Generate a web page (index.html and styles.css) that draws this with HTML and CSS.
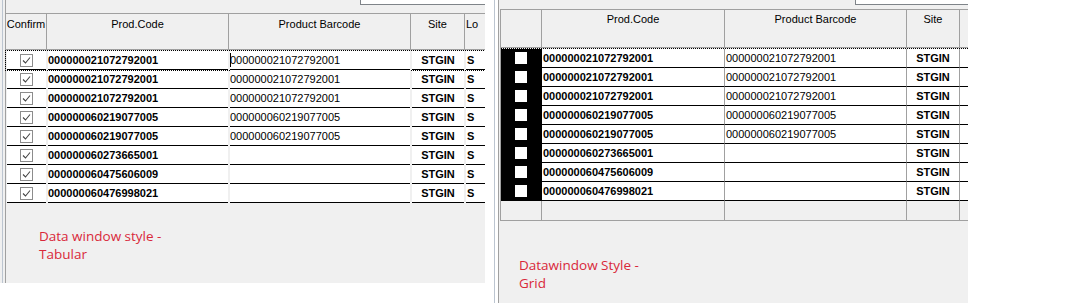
FILE: index.html
```html
<!DOCTYPE html>
<html>
<head>
<meta charset="utf-8">
<link rel="stylesheet" href="styles.css">
</head>
<body>
<div class="screen">
  <section class="panel panel-tab">
    <div class="topbar"><div class="field field-tab"></div></div>
    <div class="tab">
      <div class="tab-head">
        <div class="th">Confirm</div>
        <div class="th">Prod.Code</div>
        <div class="th">Product Barcode</div>
        <div class="th">Site</div>
        <div class="th th-left">Lo</div>
      </div>
      <div class="tab-body">
        <div class="tab-row focus">
          <div class="td chk"><svg class="cb" width="13" height="13" viewBox="0 0 13 13"><rect x="0.5" y="0.5" width="12" height="12" fill="#fff" stroke="#8c8c8c"/><polyline points="3,6.5 5.5,9 10,3.5" fill="none" stroke="#444" stroke-width="1.1"/></svg></div>
          <div class="td code">000000021072792001</div>
          <div class="td bar"><span class="caret"></span>000000021072792001</div>
          <div class="td site">STGIN</div>
          <div class="td loc">S</div>
        </div>
        <div class="tab-row">
          <div class="td chk"><svg class="cb" width="13" height="13" viewBox="0 0 13 13"><rect x="0.5" y="0.5" width="12" height="12" fill="#fff" stroke="#8c8c8c"/><polyline points="3,6.5 5.5,9 10,3.5" fill="none" stroke="#444" stroke-width="1.1"/></svg></div>
          <div class="td code">000000021072792001</div>
          <div class="td bar">000000021072792001</div>
          <div class="td site">STGIN</div>
          <div class="td loc">S</div>
        </div>
        <div class="tab-row">
          <div class="td chk"><svg class="cb" width="13" height="13" viewBox="0 0 13 13"><rect x="0.5" y="0.5" width="12" height="12" fill="#fff" stroke="#8c8c8c"/><polyline points="3,6.5 5.5,9 10,3.5" fill="none" stroke="#444" stroke-width="1.1"/></svg></div>
          <div class="td code">000000021072792001</div>
          <div class="td bar">000000021072792001</div>
          <div class="td site">STGIN</div>
          <div class="td loc">S</div>
        </div>
        <div class="tab-row">
          <div class="td chk"><svg class="cb" width="13" height="13" viewBox="0 0 13 13"><rect x="0.5" y="0.5" width="12" height="12" fill="#fff" stroke="#8c8c8c"/><polyline points="3,6.5 5.5,9 10,3.5" fill="none" stroke="#444" stroke-width="1.1"/></svg></div>
          <div class="td code">000000060219077005</div>
          <div class="td bar">000000060219077005</div>
          <div class="td site">STGIN</div>
          <div class="td loc">S</div>
        </div>
        <div class="tab-row">
          <div class="td chk"><svg class="cb" width="13" height="13" viewBox="0 0 13 13"><rect x="0.5" y="0.5" width="12" height="12" fill="#fff" stroke="#8c8c8c"/><polyline points="3,6.5 5.5,9 10,3.5" fill="none" stroke="#444" stroke-width="1.1"/></svg></div>
          <div class="td code">000000060219077005</div>
          <div class="td bar">000000060219077005</div>
          <div class="td site">STGIN</div>
          <div class="td loc">S</div>
        </div>
        <div class="tab-row">
          <div class="td chk"><svg class="cb" width="13" height="13" viewBox="0 0 13 13"><rect x="0.5" y="0.5" width="12" height="12" fill="#fff" stroke="#8c8c8c"/><polyline points="3,6.5 5.5,9 10,3.5" fill="none" stroke="#444" stroke-width="1.1"/></svg></div>
          <div class="td code">000000060273665001</div>
          <div class="td bar"></div>
          <div class="td site">STGIN</div>
          <div class="td loc">S</div>
        </div>
        <div class="tab-row">
          <div class="td chk"><svg class="cb" width="13" height="13" viewBox="0 0 13 13"><rect x="0.5" y="0.5" width="12" height="12" fill="#fff" stroke="#8c8c8c"/><polyline points="3,6.5 5.5,9 10,3.5" fill="none" stroke="#444" stroke-width="1.1"/></svg></div>
          <div class="td code">000000060475606009</div>
          <div class="td bar"></div>
          <div class="td site">STGIN</div>
          <div class="td loc">S</div>
        </div>
        <div class="tab-row">
          <div class="td chk"><svg class="cb" width="13" height="13" viewBox="0 0 13 13"><rect x="0.5" y="0.5" width="12" height="12" fill="#fff" stroke="#8c8c8c"/><polyline points="3,6.5 5.5,9 10,3.5" fill="none" stroke="#444" stroke-width="1.1"/></svg></div>
          <div class="td code">000000060476998021</div>
          <div class="td bar"></div>
          <div class="td site">STGIN</div>
          <div class="td loc">S</div>
        </div>
      </div>
    </div>
    <p class="note note-tab">Data window style -<br>Tabular</p>
  </section>

  <section class="panel panel-grid">
    <div class="topbar topbar-grid"><div class="field field-grid"></div></div>
    <div class="grid">
      <div class="grid-head">
        <div class="gh"></div>
        <div class="gh">Prod.Code</div>
        <div class="gh">Product Barcode</div>
        <div class="gh">Site</div>
        <div class="gh"></div>
      </div>
      <div class="grid-row focus">
        <div class="gc sel"><span class="sq"></span></div>
        <div class="gc code">000000021072792001</div>
        <div class="gc bar">000000021072792001</div>
        <div class="gc site">STGIN</div>
        <div class="gc"></div>
      </div>
      <div class="grid-row">
        <div class="gc sel"><span class="sq"></span></div>
        <div class="gc code">000000021072792001</div>
        <div class="gc bar">000000021072792001</div>
        <div class="gc site">STGIN</div>
        <div class="gc"></div>
      </div>
      <div class="grid-row">
        <div class="gc sel"><span class="sq"></span></div>
        <div class="gc code">000000021072792001</div>
        <div class="gc bar">000000021072792001</div>
        <div class="gc site">STGIN</div>
        <div class="gc"></div>
      </div>
      <div class="grid-row">
        <div class="gc sel"><span class="sq"></span></div>
        <div class="gc code">000000060219077005</div>
        <div class="gc bar">000000060219077005</div>
        <div class="gc site">STGIN</div>
        <div class="gc"></div>
      </div>
      <div class="grid-row">
        <div class="gc sel"><span class="sq"></span></div>
        <div class="gc code">000000060219077005</div>
        <div class="gc bar">000000060219077005</div>
        <div class="gc site">STGIN</div>
        <div class="gc"></div>
      </div>
      <div class="grid-row">
        <div class="gc sel"><span class="sq"></span></div>
        <div class="gc code">000000060273665001</div>
        <div class="gc bar"></div>
        <div class="gc site">STGIN</div>
        <div class="gc"></div>
      </div>
      <div class="grid-row">
        <div class="gc sel"><span class="sq"></span></div>
        <div class="gc code">000000060475606009</div>
        <div class="gc bar"></div>
        <div class="gc site">STGIN</div>
        <div class="gc"></div>
      </div>
      <div class="grid-row">
        <div class="gc sel"><span class="sq"></span></div>
        <div class="gc code">000000060476998021</div>
        <div class="gc bar"></div>
        <div class="gc site">STGIN</div>
        <div class="gc"></div>
      </div>
      <div class="grid-row empty">
        <div class="gc"></div>
        <div class="gc"></div>
        <div class="gc"></div>
        <div class="gc"></div>
        <div class="gc"></div>
      </div>
    </div>
    <p class="note note-grid">Datawindow Style -<br>Grid</p>
  </section>
</div>
</body>
</html>
```

FILE: styles.css
```css
* { box-sizing: border-box; }
html, body { margin: 0; padding: 0; background: #fff; }
body {
  width: 1075px;
  height: 303px;
  overflow: hidden;
  font-family: "Liberation Sans", Arial, sans-serif;
  font-size: 11px;
  color: #000;
}
.screen { display: flex; align-items: flex-start; height: 303px; }

.panel { overflow: hidden; display: flex; flex-direction: column; }

.panel-tab {
  width: 485px;
  height: 283px;
  padding-left: 5px;
  background:
    linear-gradient(to right, transparent 2px, #bcc5d0 2px, #bcc5d0 3px, transparent 3px, transparent 5px, #a0a0a0 5px, #a0a0a0 6px, transparent 6px),
    #f0f0f0;
}
.panel-grid {
  width: 474px;
  height: 303px;
  margin-left: 9px;
  padding-left: 6px;
  background:
    linear-gradient(to right, #bcc5d0 0, #bcc5d0 1px, #fff 1px, #fff 4px, #a0a0a0 4px, #a0a0a0 5px, transparent 5px),
    #f0f0f0;
}

.topbar { height: 13px; display: flex; flex: none; }
.topbar-grid { height: 9px; }
.field {
  margin-left: auto;
  height: 5px;
  background: #fff;
  border-left: 1px solid #7f8489;
  border-bottom: 1px solid #7f8489;
}
.field-tab { width: 125px; }
.field-grid { width: 113px; }

/* Tabular */
.tab { flex: none; }
.tab-head {
  display: grid;
  grid-template-columns: 41px 182px 182px 54px 60px;
  height: 37px;
  border-top: 1px solid #a0a0a0;
  border-left: 1px solid #a0a0a0;
}
.th {
  border-right: 1px solid #a0a0a0;
  border-bottom: 1px solid #a0a0a0;
  background: #f0f0f0;
  text-align: center;
  padding-top: 4px;
  line-height: 13px;
  white-space: nowrap;
  overflow: hidden;
}
.th-left { text-align: left; padding-left: 1px; }

.tab-body { margin-top: 1px; margin-left: 1px; }
.tab-row {
  display: grid;
  grid-template-columns: 41px 182px 182px 54px 60px;
  height: 19px;
}
.tab-row.focus { outline: 1px dotted #000; }
.td {
  margin: 0 1px;
  height: 19px;
  background: #fff;
  border-bottom: 1px solid #000;
  line-height: 18px;
  white-space: nowrap;
  overflow: hidden;
}
.td.chk { display: flex; align-items: center; justify-content: center; }
.cb { display: block; }
.td.code { font-weight: bold; }
.td.bar { position: relative; }
.caret {
  position: absolute;
  left: 0;
  top: 2px;
  height: 14px;
  border-left: 1px solid #000;
}
.td.site { font-weight: bold; text-align: center; }
.td.loc { font-weight: bold; padding-left: 1px; }

/* Grid */
.grid {
  flex: none;
  border-top: 1px solid #a0a0a0;
  border-left: 1px solid #a0a0a0;
}
.grid-head {
  display: grid;
  grid-template-columns: 41px 183px 182px 53px 60px;
  height: 38px;
}
.gh {
  border-right: 1px solid #a0a0a0;
  border-bottom: 1px solid #a0a0a0;
  background: #f0f0f0;
  text-align: center;
  padding-top: 3px;
  line-height: 13px;
  white-space: nowrap;
}
.grid-row {
  display: grid;
  grid-template-columns: 41px 183px 182px 53px 60px;
  height: 19px;
}
.grid-row.focus { height: 20px; border-top: 1px dotted #000; }
.gc {
  background: #fff;
  border-right: 1px solid #a0a0a0;
  border-bottom: 1px solid #000;
  line-height: 18px;
  white-space: nowrap;
  overflow: hidden;
}
.gc.sel {
  background: #000;
  border-right-color: #000;
  display: flex;
  align-items: center;
  justify-content: center;
}
.sq { display: block; width: 12px; height: 12px; background: #fff; margin-top: -1px; }
.gc.code { font-weight: bold; padding-left: 1px; }
.gc.bar { padding-left: 1px; }
.gc.site { font-weight: bold; text-align: center; }
.grid-row.empty { height: 20px; }
.grid-row.empty .gc { background: #f0f0f0; border-bottom-color: #a0a0a0; }

/* Notes */
.note {
  margin: 0;
  font-family: "Open Sans", "Noto Sans", sans-serif;
  font-size: 13.5px;
  line-height: 18px;
  color: #d9283a;
}
.note-tab { margin-top: 24px; margin-left: 34px; }
.note-grid { margin-top: 35px; margin-left: 19px; }
```
